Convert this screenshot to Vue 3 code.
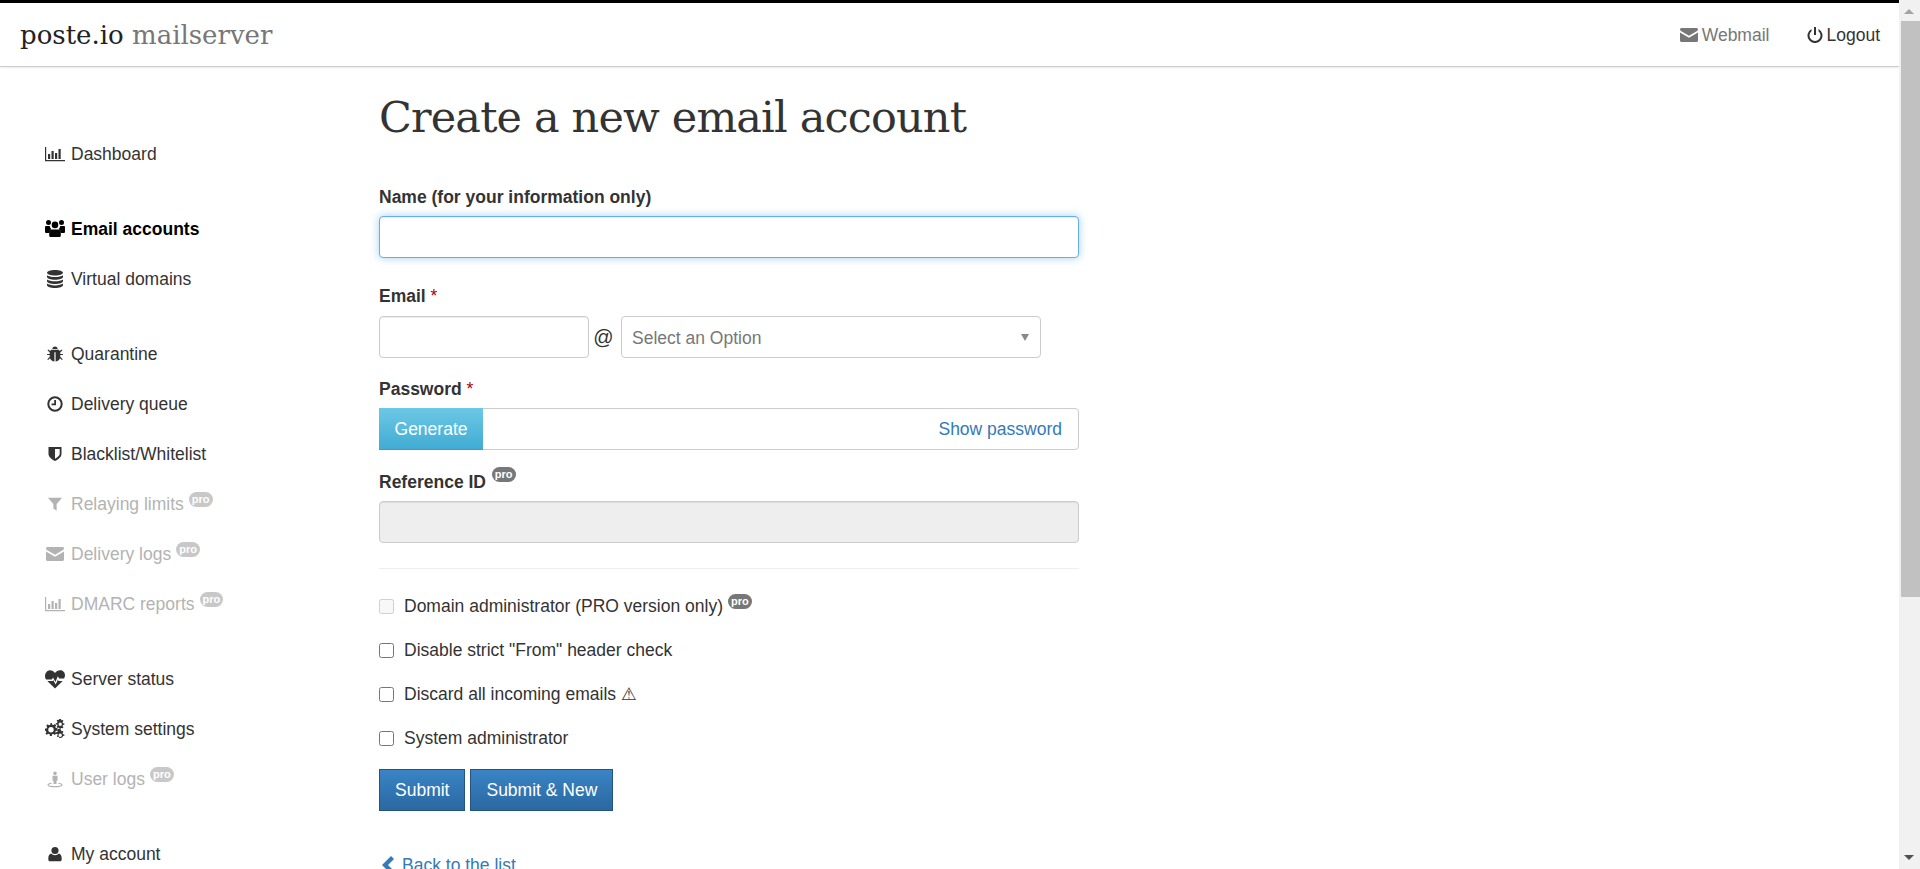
<template>
  <div class="page">
    <div class="viewport">
      <div class="topline"></div>
      <header class="header">
        <div class="brand">poste.io <span>mailserver</span></div>
        <nav class="top-links">
          <a class="webmail"><svg viewBox="0 0 18 14" class="top-icon"><path :d="icons.mail" /></svg>Webmail</a>
          <a class="logout"><svg viewBox="0 0 16 16" class="top-icon power"><path :d="icons.power" /></svg>Logout</a>
        </nav>
      </header>

      <div class="content">
        <aside class="sidebar">
          <ul v-for="(group, i) in menu" :key="i" class="menu-group">
            <li v-for="item in group" :key="item.label" :class="{ active: item.active, off: item.pro }">
              <span class="icon-box"><svg :viewBox="item.box || '0 0 20 20'"><path :d="icons[item.icon]" fill-rule="evenodd" /></svg></span>
              <span>{{ item.label }}</span>
              <sup v-if="item.pro" class="pro">pro</sup>
            </li>
          </ul>
        </aside>

        <main class="main">
          <h1>Create a new email account</h1>
          <form @submit.prevent>
            <label class="first">Name (for your information only)</label>
            <input type="text" class="field focus" />

            <label class="second">Email <b>*</b></label>
            <div class="email-row">
              <input type="text" class="field local" />
              <span class="at">@</span>
              <div class="select">Select an Option<i></i></div>
            </div>

            <label class="third">Password <b>*</b></label>
            <div class="password">
              <button type="button" class="generate">Generate</button>
              <a>Show password</a>
            </div>

            <label>Reference ID <sup class="pro dark">pro</sup></label>
            <input type="text" class="field" disabled />

            <hr />

            <div class="check" v-for="c in checks" :key="c.label">
              <input type="checkbox" :disabled="c.disabled" />
              <span>{{ c.label }}</span>
              <span v-if="c.warn" class="warn">⚠</span>
              <sup v-if="c.disabled" class="pro dark">pro</sup>
            </div>

            <div class="actions">
              <button type="button" class="primary">Submit</button>
              <button type="button" class="primary">Submit &amp; New</button>
            </div>

            <a class="back"><svg viewBox="0 0 14 18"><path d="M10 0 L13 3 L7 9 L13 15 L10 18 L1 9 Z" /></svg>Back to the list</a>
          </form>
        </main>
      </div>
    </div>

    <div class="scrollbar">
      <i class="arrow up"></i>
      <div class="thumb"></div>
      <i class="arrow down"></i>
    </div>
  </div>
</template>

<script setup>
const icons = {
  chart: 'M0 3h1.2v13H20v1.2H0z M3 10h2.2v5H3z M6.5 7h2.2v8H6.5z M10 9h2.2v6H10z M13.5 5h2.2v10h-2.2z',
  users: 'M10 2.600a3.300 3.300 0 1 1 0 6.600a3.300 3.300 0 0 1 0-6.600z M3.500 1a2.500 2.500 0 1 1 0 5a2.500 2.500 0 0 1 0-5z M16.500 1a2.500 2.500 0 1 1 0 5a2.500 2.500 0 0 1 0-5z M0.500 7h4.300a4.500 4.500 0 0 0 1.500 3a5.500 5.500 0 0 0-2.300 4H1.500C.5 14 0 13.500 0 12.500V8z M19.500 7h-4.300a4.500 4.500 0 0 1-1.500 3a5.500 5.500 0 0 1 2.300 4h2.500c1 0 1.500-.5 1.500-1.500V8z M7 10.500h6c1.500 0 2.800 1.500 2.800 3.700V16.500c0 1-.8 1.500-1.600 1.500H5.800c-.8 0-1.600-.5-1.600-1.500v-2.300C4.200 12 5.500 10.500 7 10.500z',
  db: 'M10 1c4.500 0 8 1.200 8 2.800S14.500 6.600 10 6.600S2 5.400 2 3.800S5.500 1 10 1z M2 6.200c1.500 1.200 4.500 1.800 8 1.800s6.500-.6 8-1.800V8c0 1.600-3.500 2.800-8 2.800S2 9.600 2 8z M2 10.400c1.500 1.200 4.500 1.800 8 1.800s6.500-.6 8-1.800v1.800c0 1.600-3.500 2.800-8 2.800s-8-1.200-8-2.800z M2 14.600c1.500 1.200 4.500 1.800 8 1.800s6.500-.6 8-1.800v1.600c0 1.600-3.500 2.800-8 2.800s-8-1.200-8-2.800z',
  bug: 'M10 1c2 0 3.200 1.300 3.200 3H6.800C6.800 2.300 8 1 10 1z M5.500 5h9l1.300 1.500L18 4.500l1 1-2.700 2.700V10H19.500v1.300h-3.200v2l3 3-1 1-2.300-2.300C15.300 17 13 18.800 10.700 19V8H9.300v11C7 18.800 4.700 17 4 15l-2.300 2.300-1-1 3-3v-2H.5V10h3.200V8.200L1 5.500l1-1 2.200 2z',
  clock: 'M10 2.300a7.700 7.700 0 1 1 0 15.400a7.700 7.700 0 0 1 0-15.400z M10 4.300a5.700 5.700 0 1 0 0 11.400a5.700 5.700 0 0 0 0-11.400z M9.200 6h1.800v5.200H6.500v-1.700h2.700z',
  shield: 'M3.500 3h13v7c0 3-3.500 5.500-6.500 7C7 15.500 3.500 13 3.500 10z M10 5v9.700c2-1.200 4.700-3 4.700-4.700V5z',
  filter: 'M1.500 2.500h17L12 10v8l-4-2.500V10z',
  mail: 'M0 1.500C0 .7.700 0 1.500 0h15c.8 0 1.500.7 1.500 1.500c0 .6-.4 1.100-.9 1.400L9 7.700L.9 2.900C.4 2.600 0 2.100 0 1.500z M0 4.500l9 5.300l9-5.300v8c0 .8-.7 1.500-1.500 1.500h-15C.7 14 0 13.300 0 12.500z',
  heart: 'M10 4c1.500-2 3-2.800 5-2.800c2.800 0 5 2 5 5c0 1.200-.3 2.300-1 3.300h-4.800l-1.400-2.300L10.500 13L8 8.500L6.800 10.500H1C.3 9.500 0 8.400 0 7.200c0-3 2.200-6 5-6C7 1.200 8.500 2 10 4z M2.300 12h5.400l.5-.9l2.500 4.500l2.300-5l.5 1.400h4.200L10 19.500z',
  cogs: 'M7 5.500l1.600.4l1.200-1l1.500 1.500l-1 1.200l.5 1.500l1.700.2v2.200l-1.700.2l-.5 1.500l1 1.200l-1.500 1.500l-1.200-1l-1.600.4l-.2 1.700H4.900l-.2-1.700l-1.500-.5l-1.300 1L.4 14.800l1-1.300l-.5-1.400L0 11.800V9.600l1.700-.2l.5-1.500l-1-1.200L2.700 5.200l1.200 1l1.400-.5l.2-1.700h1.300z M6 8a2.700 2.700 0 1 0 0 5.400a2.700 2.700 0 0 0 0-5.400z M16 0l.4 1.300l1.300-.4l.8 1.200l-1 .9l.5 1.200l1.400.2v1.400l-1.400.2l-.5 1.200l1 .9l-.8 1.200l-1.300-.4l-.9.900h-1.400l-.4-1.300l-1.300.4l-.8-1.200l1-.9l-.5-1.200l-1.400-.2V4.200l1.400-.2l.5-1.200l-1-.9l.8-1.200l1.300.4L14.400 0z M15.200 3.600a1.700 1.700 0 1 0 0 3.400a1.700 1.700 0 0 0 0-3.400z M16 11l.4 1.300l1.300-.4l.8 1.200l-1 .9l.5 1.200l1.400.2v1.400l-1.400.2l-.5 1.200l-1.800.8h-1.400l-.4-1.300l-1.300.4l-.8-1.200l1-.9l-.5-1.200l-1.400-.2v-1.400l1.400-.2l.5-1.200l-1-.9l.8-1.200l1.300.4l.5-1.300z M15.200 14.600a1.700 1.700 0 1 0 0 3.400a1.700 1.700 0 0 0 0-3.400z',
  street: 'M10 1a2.200 2.200 0 1 1 0 4.400a2.200 2.200 0 0 1 0-4.400z M7 6h6v6h-1.200v4H8.200v-4H7z M6 14.500v1.300c-2 .3-3.500.8-3.500 1.300c0 .7 3.300 1.300 7.500 1.300s7.500-.6 7.500-1.300c0-.5-1.500-1-3.500-1.300v-1.300c3 .4 5 1.300 5 2.600c0 1.600-4 2.900-9 2.900s-9-1.300-9-2.900c0-1.300 2-2.200 5-2.600z',
  user: 'M10 1.500a4.300 4.300 0 1 1 0 8.600a4.300 4.300 0 0 1 0-8.600z M5.500 9.500c1 1.200 2.800 2 4.500 2s3.500-.8 4.500-2c2 .2 3.500 2.500 3.500 5.500v2c0 1-.8 1.800-1.800 1.800H3.800C2.800 18.800 2 18 2 17v-2c0-3 1.500-5.300 3.500-5.500z',
  power: 'M7 0h2v8H7z M4.500 1.900v2.300A5.500 5.500 0 1 0 11.500 4.200V1.900a7.500 7.500 0 1 1-7 0z'
}

const small = '-2 -2 24 24'

const menu = [
  [{ label: 'Dashboard', icon: 'chart' }],
  [
    { label: 'Email accounts', icon: 'users', active: true },
    { label: 'Virtual domains', icon: 'db' }
  ],
  [
    { label: 'Quarantine', icon: 'bug', box: small },
    { label: 'Delivery queue', icon: 'clock' },
    { label: 'Blacklist/Whitelist', icon: 'shield' },
    { label: 'Relaying limits', icon: 'filter', pro: true, box: small },
    { label: 'Delivery logs', icon: 'mail', pro: true, box: '0 -3 18 20' },
    { label: 'DMARC reports', icon: 'chart', pro: true }
  ],
  [
    { label: 'Server status', icon: 'heart' },
    { label: 'System settings', icon: 'cogs' },
    { label: 'User logs', icon: 'street', pro: true, box: small }
  ],
  [{ label: 'My account', icon: 'user', box: small }]
]

const checks = [
  { label: 'Domain administrator (PRO version only)', disabled: true },
  { label: 'Disable strict "From" header check' },
  { label: 'Discard all incoming emails', warn: true },
  { label: 'System administrator' }
]
</script>

<style>
html, body {
  margin: 0;
  height: 100%;
  overflow: hidden;
}
</style>

<style scoped>
.page {
  display: flex;
  height: 100vh;
  overflow: hidden;
  background: #fff;
  color: #333;
  font-family: "Liberation Sans", Arial, sans-serif;
  font-size: 17.5px;
  line-height: 20px;
}

.viewport {
  flex: 1;
  min-width: 0;
  overflow: hidden;
}

.topline {
  height: 3px;
  background: #000;
}

.header {
  height: 64px;
  box-sizing: border-box;
  padding: 0 19px 0 20px;
  display: flex;
  align-items: center;
  justify-content: space-between;
  border-bottom: 1px solid #ccc;
  box-shadow: 0 1px 2px rgba(0, 0, 0, .08);
}

.brand {
  font-family: "DejaVu Serif", serif;
  font-size: 26px;
  color: #222;
  margin-top: 1px;
}
.brand span {
  color: #777;
}

.top-links {
  display: flex;
  gap: 38px;
}
.top-links a {
  display: flex;
  align-items: center;
}
.webmail {
  color: #777;
}
.top-icon {
  width: 18px;
  height: 14px;
  margin-right: 4px;
  fill: currentColor;
}
.top-icon.power {
  width: 16px;
  height: 16px;
  margin-right: 3px;
  fill: #333;
}

.content {
  display: flex;
}

.sidebar {
  width: 379px;
  flex: none;
  padding: 62px 0 0 45px;
  box-sizing: border-box;
}

.menu-group {
  list-style: none;
  margin: 0 0 25px;
  padding: 0;
}
.menu-group li {
  height: 50px;
  display: flex;
  align-items: center;
}
.menu-group li.active {
  font-weight: bold;
  color: #000;
}
.menu-group li.off {
  color: #b3b3b3;
}

.icon-box {
  width: 20px;
  height: 20px;
  margin-right: 6px;
  flex: none;
}
.icon-box svg {
  display: block;
  width: 20px;
  height: 20px;
  fill: currentColor;
}

.pro {
  display: inline-block;
  height: 15px;
  line-height: 14px;
  padding: 0 3px;
  margin-left: 5px;
  border-radius: 8px;
  background: #c8c8c8;
  color: #fff;
  font-size: 11px;
  font-weight: bold;
  vertical-align: top;
  position: relative;
  top: -5px;
}
.pro.dark {
  background: #777;
  margin-left: 1px;
}

.main {
  width: 700px;
  flex: none;
}

h1 {
  margin: 26px 0 46px;
  font-family: "DejaVu Serif", serif;
  font-size: 43px;
  font-weight: normal;
  line-height: 48px;
  letter-spacing: -.85px;
  color: #333;
}

label {
  display: block;
  font-weight: bold;
  margin: 22px 0 9px;
  color: #333;
}
label.first {
  margin: 0 0 9px;
}
label.second {
  margin-top: 28px;
}
label.third {
  margin-top: 21px;
}
label b {
  color: #a00;
  font-weight: normal;
}

.field {
  display: block;
  box-sizing: border-box;
  width: 100%;
  height: 42px;
  border: 1px solid #ccc;
  border-radius: 4px;
  background: #fff;
  box-shadow: inset 0 1px 1px rgba(0, 0, 0, .075);
  padding: 6px 12px;
  outline: none;
}
.field.focus {
  border-color: #66afe9;
  box-shadow: inset 0 1px 1px rgba(0, 0, 0, .075), 0 0 8px rgba(102, 175, 233, .6);
}
.field:disabled {
  background: #eee;
}

.email-row {
  display: flex;
  align-items: center;
}
.field.local {
  width: 210px;
  flex: none;
}
.at {
  width: 29px;
  padding-right: 3px;
  text-align: center;
  font-size: 20px;
}
.select {
  width: 420px;
  height: 42px;
  margin-top: 1px;
  box-sizing: border-box;
  border: 1px solid #ccc;
  border-radius: 4px;
  padding: 1px 9px 0 10px;
  display: flex;
  align-items: center;
  justify-content: space-between;
  color: #777;
}
.select i {
  width: 0;
  height: 0;
  border: 4.500px solid transparent;
  border-top: 7px solid #888;
  border-bottom: 0;
  margin-right: 2px;
}

.password {
  height: 42px;
  box-sizing: border-box;
  border: 1px solid #ccc;
  border-radius: 4px;
  display: flex;
  align-items: center;
  justify-content: space-between;
  padding-right: 16px;
}
.password a {
  color: #337ab7;
}
.generate {
  width: 104px;
  height: 42px;
  margin: -1px 0 -1px -1px;
  border: 0;
  border-bottom: 1px solid #28a4c9;
  background: linear-gradient(#6cc8e5, #41acd3);
  color: #fff;
  font: inherit;
  padding: 0;
}

hr {
  border: 0;
  border-top: 1px solid #eee;
  margin: 25px 0 15px;
}

.check {
  height: 44px;
  display: flex;
  align-items: center;
}
.check input {
  width: 15px;
  height: 15px;
  margin: 1px 10px 0 0;
  flex: none;
}
.warn {
  font-family: "DejaVu Sans", sans-serif;
  margin-left: 5px;
}
.check .pro {
  margin-left: 5px;
}

.actions {
  display: flex;
  gap: 5px;
  margin-top: 9px;
}
.primary {
  height: 42px;
  padding: 0 15px;
  border: 1px solid #245580;
  background: linear-gradient(#3a84c6, #2a68a0);
  color: #fff;
  font: inherit;
}

.back {
  display: flex;
  align-items: center;
  margin-top: 44px;
  color: #337ab7;
}
.back svg {
  width: 14px;
  height: 18px;
  margin: 0 7px 0 2px;
  fill: currentColor;
}

.scrollbar {
  width: 21px;
  flex: none;
  background: #f1f1f1;
  position: relative;
}
.thumb {
  position: absolute;
  top: 21px;
  left: 2px;
  right: 0;
  height: 576px;
  background: #c1c1c1;
}
.arrow {
  position: absolute;
  left: 5px;
  width: 0;
  height: 0;
  border-left: 5px solid transparent;
  border-right: 5px solid transparent;
}
.arrow.up {
  top: 9px;
  border-bottom: 5px solid #a3a3a3;
}
.arrow.down {
  bottom: 9px;
  border-top: 5px solid #505050;
}
</style>
